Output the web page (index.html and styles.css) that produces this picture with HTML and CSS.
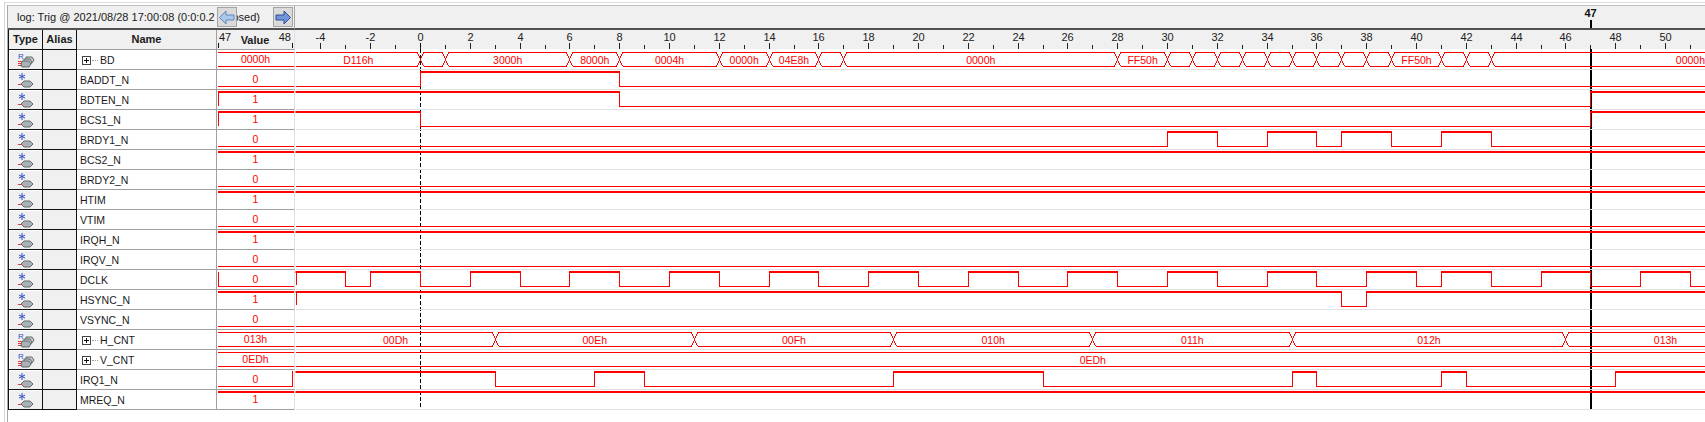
FILE: index.html
```html
<!DOCTYPE html>
<html lang="en">
<head>
    <meta charset="UTF-8">
    <meta name="viewport" content="width=device-width, initial-scale=1.0">
    <title>SignalTap log</title>
    <link rel="stylesheet" href="styles.css">
</head>
<body>
    <!-- node type icons -->
    <svg class="defs" width="0" height="0">
        <symbol id="bit" viewBox="0 0 32 18">
            <path d="M13 3v7M10 5l6 3M16 5l-6 3" stroke="#2f4fc8" stroke-width="1" fill="none"/>
            <path d="M9 14.5h3" stroke="#f03030" stroke-width="1"/>
            <path d="M12 14l3-3h6l3 3-3 3h-6z" fill="#aab2b6" stroke="#666a6e"/>
        </symbol>
        <symbol id="bus" viewBox="0 0 32 18">
            <text x="9" y="9" class="ico-r">R</text>
            <path d="M9 11.5h5M9 13.5h4M9 15.5h4" stroke="#f03030" stroke-width="1"/>
            <path d="M17 7h6l2 3-2 3h-6z" fill="#c4c8cc" stroke="#666a6e"/>
            <path d="M15 9h6l2 3-2 3h-6z" fill="#c4c8cc" stroke="#666a6e"/>
            <path d="M13 11h7l2 3-2 3h-7l-1-3z" fill="#aab2b6" stroke="#666a6e"/>
        </symbol>
    </svg>

    <div class="frame">
        <div class="pane">
            <div class="left">
                <div class="toolbar">
                    <span class="log-title">log: Trig @ 2021/08/28 17:00:08 (0:0:0.2 elapsed)</span>
                    <span class="nav nav-prev">
                        <svg width="18" height="18" viewBox="0 0 18 18"><path d="M1.5 9.5L8 3v4h8v5H8v4z" fill="#a9c8ec" stroke="#5f86c0"/></svg>
                    </span>
                    <span class="nav nav-next">
                        <svg width="18" height="18" viewBox="0 0 18 18"><path d="M16.5 9.5L10 3v4H2v5h8v4z" fill="#6f95dc" stroke="#2f4f94"/></svg>
                    </span>
                </div>
                <div class="signals">
                    <div class="head type">Type</div><div class="head alias">Alias</div><div class="head name-head">Name</div>
                    <div class="head value-head"><span class="mark">47</span><span class="value-title">Value</span><span class="mark">48</span></div>

                    <div class="type"><svg class="ico"><use href="#bus"/></svg></div><div class="alias"></div><div class="name group"><i class="expand"></i><i class="dots"></i>BD</div><div class="value"><i class="trace bus-line"></i>0000h</div>
                    <div class="type"><svg class="ico"><use href="#bit"/></svg></div><div class="alias"></div><div class="name">BADDT_N</div><div class="value"><i class="trace lo"></i>0</div>
                    <div class="type"><svg class="ico"><use href="#bit"/></svg></div><div class="alias"></div><div class="name">BDTEN_N</div><div class="value"><i class="trace hi tick-left"></i>1</div>
                    <div class="type"><svg class="ico"><use href="#bit"/></svg></div><div class="alias"></div><div class="name">BCS1_N</div><div class="value"><i class="trace hi tick-left"></i>1</div>
                    <div class="type"><svg class="ico"><use href="#bit"/></svg></div><div class="alias"></div><div class="name">BRDY1_N</div><div class="value"><i class="trace lo"></i>0</div>
                    <div class="type"><svg class="ico"><use href="#bit"/></svg></div><div class="alias"></div><div class="name">BCS2_N</div><div class="value"><i class="trace hi"></i>1</div>
                    <div class="type"><svg class="ico"><use href="#bit"/></svg></div><div class="alias"></div><div class="name">BRDY2_N</div><div class="value"><i class="trace lo"></i>0</div>
                    <div class="type"><svg class="ico"><use href="#bit"/></svg></div><div class="alias"></div><div class="name">HTIM</div><div class="value"><i class="trace hi"></i>1</div>
                    <div class="type"><svg class="ico"><use href="#bit"/></svg></div><div class="alias"></div><div class="name">VTIM</div><div class="value"><i class="trace lo"></i>0</div>
                    <div class="type"><svg class="ico"><use href="#bit"/></svg></div><div class="alias"></div><div class="name">IRQH_N</div><div class="value"><i class="trace hi"></i>1</div>
                    <div class="type"><svg class="ico"><use href="#bit"/></svg></div><div class="alias"></div><div class="name">IRQV_N</div><div class="value"><i class="trace lo"></i>0</div>
                    <div class="type"><svg class="ico"><use href="#bit"/></svg></div><div class="alias"></div><div class="name">DCLK</div><div class="value"><i class="trace lo tick-left"></i>0</div>
                    <div class="type"><svg class="ico"><use href="#bit"/></svg></div><div class="alias"></div><div class="name">HSYNC_N</div><div class="value"><i class="trace hi"></i>1</div>
                    <div class="type"><svg class="ico"><use href="#bit"/></svg></div><div class="alias"></div><div class="name">VSYNC_N</div><div class="value"><i class="trace lo"></i>0</div>
                    <div class="type"><svg class="ico"><use href="#bus"/></svg></div><div class="alias"></div><div class="name group"><i class="expand"></i><i class="dots"></i>H_CNT</div><div class="value"><i class="trace bus-line"></i>013h</div>
                    <div class="type"><svg class="ico"><use href="#bus"/></svg></div><div class="alias"></div><div class="name group"><i class="expand"></i><i class="dots"></i>V_CNT</div><div class="value"><i class="trace bus-line"></i>0EDh</div>
                    <div class="type"><svg class="ico"><use href="#bit"/></svg></div><div class="alias"></div><div class="name">IRQ1_N</div><div class="value"><i class="trace lo tick-right"></i>0</div>
                    <div class="type"><svg class="ico"><use href="#bit"/></svg></div><div class="alias"></div><div class="name">MREQ_N</div><div class="value"><i class="trace hi"></i>1</div>
                </div>
            </div>
            <svg id="wave" class="wave" width="1410" height="404" viewBox="295 6 1410 404"></svg>
        </div>
    </div>

    <script src="script.js"></script>
</body>
</html>
```

FILE: styles.css
```css
* {
    box-sizing: border-box;
}

html, body {
    margin: 0;
    height: 422px;
    overflow: hidden;
    background: #fff;
}

body {
    font-family: "Liberation Sans", Arial, sans-serif;
    font-size: 10.5px;
    color: #1a1a1a;
    padding: 2px 0 0 4px;
}

.defs {
    position: absolute;
}

.ico-r {
    font-family: "Liberation Sans", Arial, sans-serif;
    font-size: 8px;
    fill: #2f4fc8;
}

.frame {
    height: 420px;
    padding: 2px 0 0 2px;
    border-top: 1px solid #dcdcdc;
    border-left: 1px solid #d4d4d4;
}

.pane {
    display: flex;
    height: 100%;
    border-top: 1px solid #c0c0c0;
    border-left: 1px solid #a8a8a8;
}

.left {
    flex: none;
    width: 287px;
}

.wave {
    flex: none;
    display: block;
}

/* top strip */
.toolbar {
    position: relative;
    height: 24px;
    padding-left: 9px;
    line-height: 22px;
    font-size: 11px;
    white-space: nowrap;
    background: #f0f0f0;
    border-right: 1px solid #a8a8a8;
    border-bottom: 2px solid #505050;
}

.nav {
    position: absolute;
    top: 1px;
    width: 20px;
    height: 20px;
    background: #dadada;
    border: 1px solid #a4a4a4;
}

.nav svg {
    display: block;
}

.nav-prev {
    left: 209px;
}

.nav-next {
    left: 265px;
}

/* signal table */
.signals {
    display: grid;
    grid-template-columns: 35px 34px 140px 78px;
    grid-auto-rows: 20px;
}

.head {
    background: #f0f0f0;
    font-size: 11px;
    font-weight: bold;
    line-height: 19px;
    text-align: center;
}

.type, .alias {
    background: #f0f0f0;
    border-right: 1px solid #111;
    border-bottom: 1px solid #111;
}

.type {
    border-left: 1px solid #111;
    box-shadow: inset 1px 1px 0 #fff;
}

.ico {
    display: block;
    width: 32px;
    height: 18px;
}

.head.type {
    box-shadow: none;
}

.name, .name-head, .value, .value-head {
    border-bottom: 1px solid #a0a0a0;
}

.name, .name-head {
    border-right: 1px solid #a0a0a0;
}

.name {
    display: flex;
    align-items: center;
    padding-left: 3px;
    padding-top: 1px;
    white-space: nowrap;
}

.group {
    padding-left: 5px;
}

.expand {
    position: relative;
    width: 9px;
    height: 9px;
    border: 1px solid #444;
    background: #fff;
}

.expand::before, .expand::after {
    content: "";
    position: absolute;
    background: #111;
}

.expand::before {
    left: 1px;
    top: 3px;
    width: 5px;
    height: 1px;
}

.expand::after {
    left: 3px;
    top: 1px;
    width: 1px;
    height: 5px;
}

.dots {
    width: 6px;
    margin: 0 2px 0 1px;
    border-top: 1px dotted #999;
}

.value-head {
    display: flex;
    justify-content: space-between;
    padding: 0 3px 0 2px;
    border-right: 1px solid #e0e0e0;
    position: relative;
}

.value-head::before, .value-head::after {
    content: "";
    position: absolute;
    bottom: 1px;
    width: 1px;
    height: 5px;
    background: #111;
}

.value-head::before {
    left: 1px;
}

.value-head::after {
    right: 1px;
}

.mark {
    font-weight: normal;
    line-height: 14px;
}

.value-title {
    padding-top: 1px;
}

.value {
    position: relative;
    color: #f00;
    line-height: 19px;
    text-align: center;
    border-right: 1px solid #e0e0e0;
}

/* the little trace behind each value */
.trace {
    position: absolute;
    left: 1px;
    right: 0;
    top: 1px;
    height: 16px;
    border: 0 solid #f00;
}

.hi {
    height: 15px;
    border-top-width: 2px;
}

.lo {
    border-bottom-width: 1px;
}

.bus-line {
    top: 2px;
    height: 15px;
    border-top-width: 1px;
    border-bottom-width: 1px;
}

.tick-left {
    border-left-width: 1px;
}

.lo.tick-left {
    top: 2px;
    height: 15px;
}

.tick-right {
    border-right-width: 1px;
    right: 1px;
}

/* waveform pane, filled in by script.js */
.strip {
    fill: #f0f0f0;
}

.strip-line {
    fill: #505050;
}

.grid-line {
    stroke: #e0e0e0;
}

.axis-tick {
    stroke: #222;
}

.axis-label {
    font-size: 11px;
    fill: #222;
    text-anchor: middle;
}

.cursor-label {
    font-size: 11px;
    font-weight: bold;
    fill: #111;
    text-anchor: middle;
}

.zero-line {
    stroke: #000;
    stroke-dasharray: 4 2;
}

.cursor-line {
    fill: #000;
}

.trace-line {
    fill: none;
    stroke: #f00;
    shape-rendering: crispEdges;
}

.trace-high {
    fill: #f00;
}

.bus-path {
    fill: none;
    stroke: #f00;
    shape-rendering: crispEdges;
}

.bus-label {
    font-size: 10.5px;
    fill: #f00;
    text-anchor: middle;
}
```

FILE: script.js
```js
// sample number -> x pixel
var ZERO = 420.5;
var STEP = 24.9;
var START = -5;
var TRIGGER = 47;

function px(u) {
    return Math.round(ZERO + STEP * u - 0.5) + 0.5;
}

// bit rows: first level, then the samples where it toggles
// bus rows: list of [start sample, label], last entry only closes the segment
var rows = [
    { bus: [[-5, 'D116h'], [0, ''], [1, '3000h'], [6, '8000h'], [8, '0004h'], [12, '0000h'], [14, '04E8h'], [16, ''], [17, '0000h'],
            [28, 'FF50h'], [30, ''], [31, ''], [32, ''], [33, ''], [34, ''], [35, ''], [36, ''], [37, ''], [38, ''],
            [39, 'FF50h'], [41, ''], [42, ''], [43, '0000h'], [59]] },
    { level: 0, toggles: [0, 8] },
    { level: 1, toggles: [8, 47] },
    { level: 1, toggles: [0, 47] },
    { level: 0, toggles: [30, 32, 34, 36, 37, 39, 41, 43] },
    { level: 1, toggles: [] },
    { level: 0, toggles: [] },
    { level: 1, toggles: [] },
    { level: 0, toggles: [] },
    { level: 1, toggles: [] },
    { level: 0, toggles: [] },
    { level: 1, rise: true, toggles: [-3, -2, 0, 2, 4, 6, 8, 10, 12, 14, 16, 18, 20, 22, 24, 26, 28, 30, 32, 34, 36, 38, 40, 41, 43, 45, 47, 49, 51] },
    { level: 1, rise: true, toggles: [37, 38] },
    { level: 0, toggles: [] },
    { bus: [[-5, '00Dh'], [3, '00Eh'], [11, '00Fh'], [19, '010h'], [27, '011h'], [35, '012h'], [46, '013h'], [54]] },
    { bus: [[-5, '0EDh'], [59]] },
    { level: 1, toggles: [3, 7, 9, 19, 25, 35, 36, 41, 42, 48] },
    { level: 1, toggles: [] }
];

var out = [];

function drawBit(row, top) {
    var high = top + 3;
    var low = top + 17.5;
    var level = row.level;
    var from = 296;
    var edges = row.toggles.map(px).concat([1705]);

    if (row.rise) {
        out.push('<path class="trace-line" d="M296.5 ' + (top + 2) + 'V' + (top + 16) + '"/>');
    }
    edges.forEach(function(x, i) {
        if (level) {
            out.push('<rect class="trace-high" x="' + (from - 0.5) + '" y="' + (high - 1) + '" width="' + (x - from + 1) + '" height="2"/>');
        } else {
            out.push('<path class="trace-line" d="M' + from + ' ' + low + 'H' + x + '"/>');
        }
        if (i < edges.length - 1) {
            out.push('<path class="trace-line" d="M' + x + ' ' + (top + 2) + 'V' + (top + 18) + '"/>');
        }
        from = x;
        level = !level;
    });
}

function drawBus(row, top) {
    var up = top + 3.5;
    var down = top + 17.5;
    var d = '';
    row.bus.forEach(function(seg, i) {
        var next = row.bus[i + 1];
        if (!next) return;
        var a = i == 0 ? 296 : px(seg[0]) + 3;
        var b = px(next[0]) - 3;
        d += 'M' + a + ' ' + up + 'H' + b + 'M' + a + ' ' + down + 'H' + b;
        d += 'M' + b + ' ' + up + 'L' + (b + 6) + ' ' + down + 'M' + b + ' ' + down + 'L' + (b + 6) + ' ' + up;
        if (seg[1]) {
            var mid = (ZERO + STEP * seg[0] + ZERO + STEP * next[0]) / 2;
            out.push('<text class="bus-label" x="' + mid + '" y="' + (top + 14.5) + '">' + seg[1] + '</text>');
        }
    });
    out.push('<path class="bus-path" d="' + d + '"/>');
}

// header strips
out.push('<rect class="strip" x="295" y="6" width="1410" height="22"/>');
out.push('<rect class="strip-line" x="295" y="28" width="1410" height="2"/>');
out.push('<rect class="strip" x="295" y="30" width="1410" height="19"/>');
out.push('<text class="cursor-label" x="' + px(TRIGGER) + '" y="17">' + TRIGGER + '</text>');
out.push('<rect class="cursor-line" x="1590" y="20" width="2" height="8"/>');

// time axis
for (var u = -4; u <= 52; u++) {
    var x = px(u);
    var even = u % 2 == 0;
    out.push('<path class="axis-tick" d="M' + x + ' ' + (even ? 43 : 45) + 'V49"/>');
    if (even) {
        out.push('<text class="axis-label" x="' + x + '" y="41">' + u + '</text>');
    }
}

// cursors go first so the row lines cut across them
out.push('<path class="zero-line" d="M420.5 43V409"/>');
out.push('<rect class="cursor-line" x="1590" y="49" width="2" height="360"/>');

rows.forEach(function(row, i) {
    var top = 49 + 20 * i;
    if (row.bus) {
        drawBus(row, top);
    } else {
        drawBit(row, top);
    }
    out.push('<path class="grid-line" d="M296 ' + (top + 20.5) + 'H1705"/>');
});

document.getElementById('wave').innerHTML = out.join('');
```
